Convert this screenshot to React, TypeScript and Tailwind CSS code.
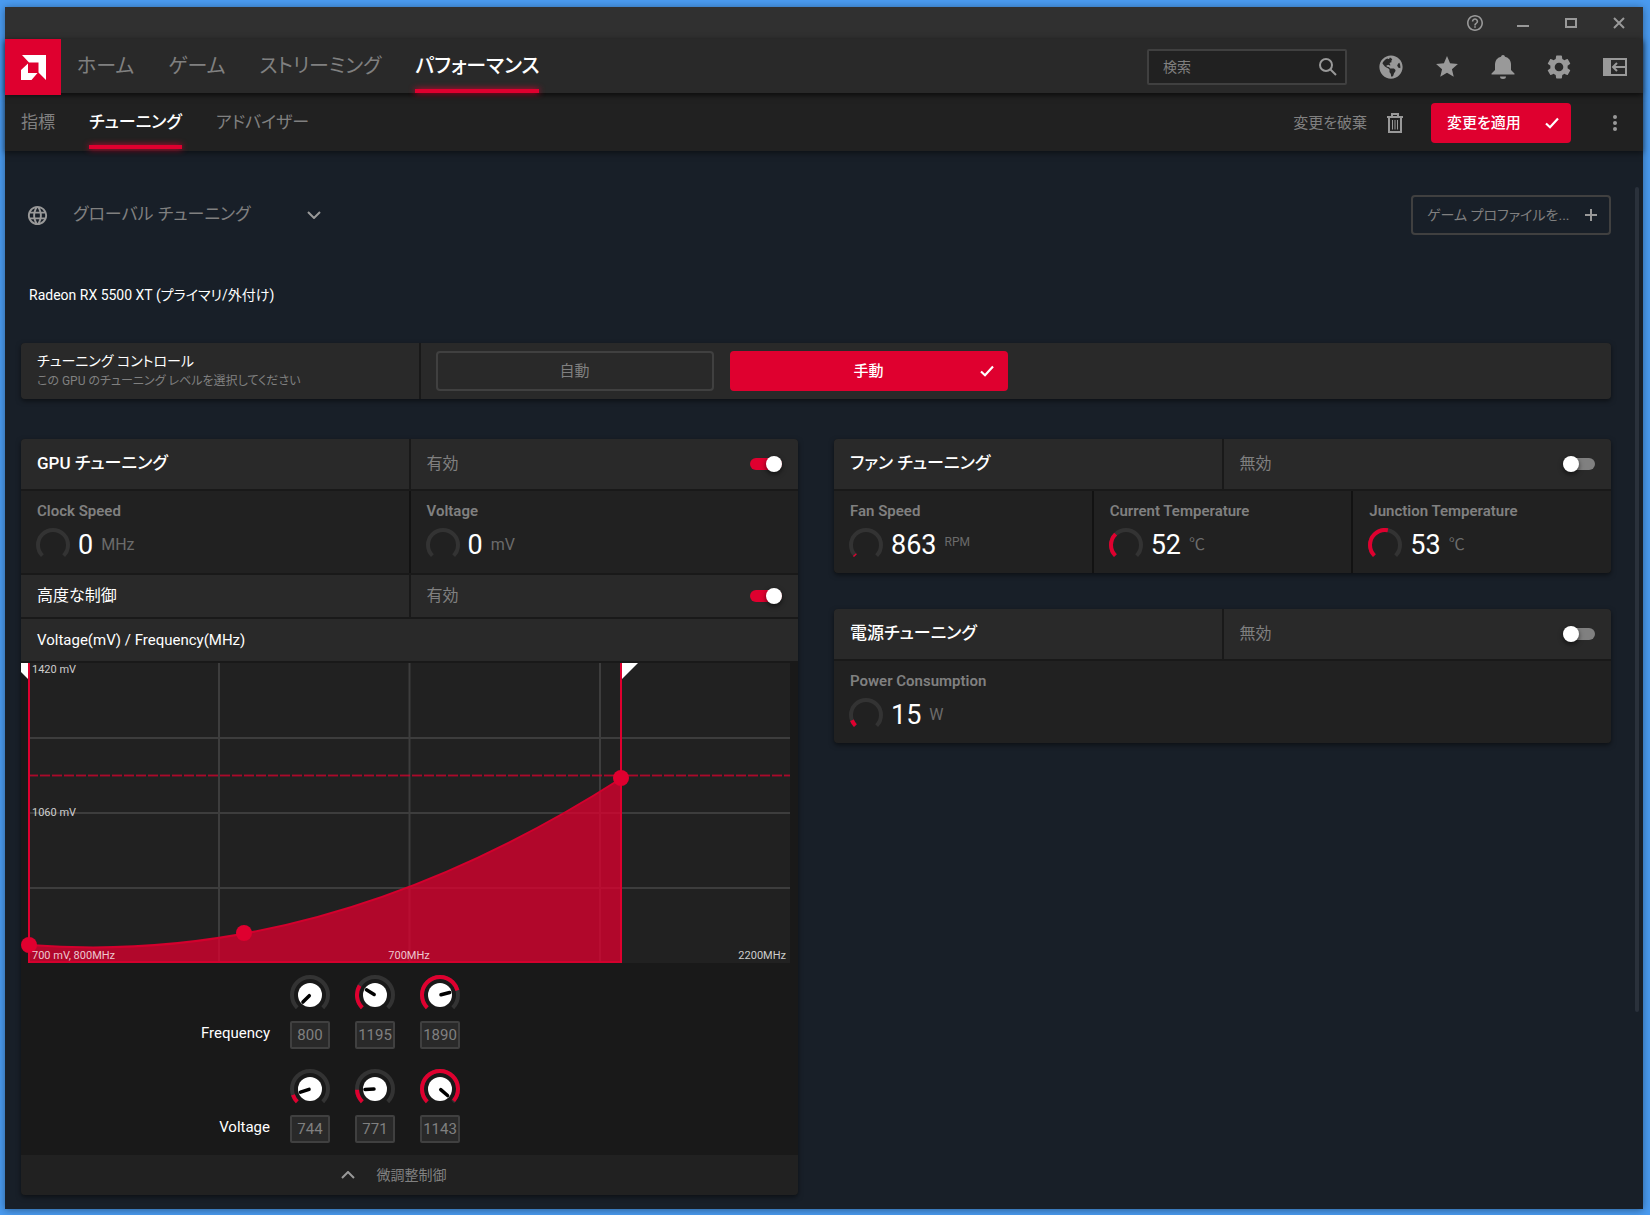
import React, { useState } from "react";
import { FaGlobeAmericas } from "react-icons/fa";
import { MdHelpOutline, MdLanguage, MdSettings, MdStar } from "react-icons/md";

const mainTabs = ["ホーム", "ゲーム", "ストリーミング", "パフォーマンス"];
const subTabs = ["指標", "チューニング", "アドバイザー"];

// Gauges and knobs share a 270 degree track that opens at the bottom
function arcPath(c: number, r: number) {
    const d = r * Math.SQRT1_2;
    return `M${c - d} ${c + d}A${r} ${r} 0 1 1 ${c + d} ${c + d}`;
}

function Arc({ c, r, ratio }: { c: number; r: number; ratio: number }) {
    return (
        <>
            <path d={arcPath(c, r)} fill="none" stroke="#333333" strokeWidth="4" />
            {ratio > 0 && (
                <path
                    d={arcPath(c, r)}
                    fill="none"
                    stroke="#df002f"
                    strokeWidth="4"
                    pathLength={100}
                    strokeDasharray={`${ratio * 100} 200`}
                />
            )}
        </>
    );
}

function CheckIcon() {
    return (
        <svg viewBox="0 0 14 12" className="w-3.5 h-3" fill="none" stroke="currentColor" strokeWidth="2.2">
            <path d="M1 6.5 5 10.2 13 1.5" />
        </svg>
    );
}

function Tab({ label, active, size }: { label: string; active: boolean; size: "lg" | "md" }) {
    return (
        <a
            href="#"
            aria-current={active ? "page" : undefined}
            className={`flex flex-col h-full ${size === "lg" ? "text-xl" : "text-[17px]"} ${active ? "text-white font-medium" : "text-[#808080]"}`}
        >
            <span className={`flex-1 flex items-center ${size === "lg" ? "pt-1" : "pt-2"}`}>{label}</span>
            <span className={`h-1 ${active ? "bg-[#df002f] shadow-[0_0_6px_#df002f]" : ""}`} />
        </a>
    );
}

function Toggle({ id, on }: { id: string; on: boolean }) {
    const [checked, setChecked] = useState(on);
    return (
        <div className="flex-1 flex items-center justify-between px-4 bg-[#292929]">
            <label htmlFor={id} className="text-[#808080]">{checked ? "有効" : "無効"}</label>
            <input
                id={id}
                type="checkbox"
                role="switch"
                checked={checked}
                onChange={() => setChecked(!checked)}
                className="appearance-none w-8 h-3 rounded-full bg-[#808080] checked:bg-[#df002f] before:block before:size-4 before:-mt-0.5 before:rounded-full before:bg-white before:shadow-[0_2px_5px_rgba(0,0,0,0.6)] checked:before:ml-4"
            />
        </div>
    );
}

function PanelHeader({ id, title, on }: { id: string; title: string; on: boolean }) {
    return (
        <div className="grid grid-cols-2 gap-0.5 h-[50px]">
            <h2 className="flex items-center px-4 bg-[#292929] text-[17px] font-medium text-white">{title}</h2>
            <Toggle id={id} on={on} />
        </div>
    );
}

function Metric({ label, value, unit, ratio, small }: { label: string; value: string; unit: string; ratio: number; small?: boolean }) {
    return (
        <div className="h-[82px] px-4 pt-2 bg-[#212121]">
            <div className="text-[15px] leading-6 font-semibold text-[#808080]">{label}</div>
            <div className="flex items-center h-10 mt-0.5">
                <svg viewBox="0 0 34 34" className="size-[34px] -ml-px">
                    <Arc c={17} r={15} ratio={ratio} />
                </svg>
                <span className="ml-2 text-[27px] text-white">{value}</span>
                <span className={`ml-2 text-[#6b6b6b] ${small ? "text-xs -mt-1.5" : "text-base"}`}>{unit}</span>
            </div>
        </div>
    );
}

function Chart() {
    return (
        <svg viewBox="0 0 777 300" className="block w-full" role="img" aria-label="Voltage(mV) / Frequency(MHz)">
            <rect x="8" width="761" height="300" fill="#212121" />
            <g stroke="#3d3d3d" strokeWidth="2">
                <path d="M198 0V300M388.500 0V300M579 0V300" />
                <path d="M8 75H769M8 150H769M8 225H769" />
            </g>
            <path d="M7 112.500H769" stroke="#df002f" strokeOpacity="0.3" strokeWidth="3" strokeDasharray="10 2" />
            <path d="M7 112.500H769" stroke="#df002f" strokeOpacity="0.6" strokeWidth="1" strokeDasharray="10 2" />
            <path d="M8 282Q304 305 600 115.500V299H8Z" fill="#df002f" fillOpacity="0.76" />
            <path d="M8 282Q304 305 600 115.500V299H8" fill="none" stroke="#d3002d" strokeWidth="2" />
            <path d="M0 0H7V16L0 9Z" fill="#fff" />
            <path d="M601 0H617L601 16Z" fill="#fff" />
            <path d="M8 0V300M600 0V300" stroke="#df002f" strokeWidth="2" />
            <g fill="#df002f">
                <circle cx="8" cy="282" r="8" />
                <circle cx="223" cy="270" r="8" />
                <circle cx="600" cy="115" r="8" />
            </g>
            <g fill="#fff" fillOpacity="0.78" fontSize="11">
                <text x="11" y="10">1420 mV</text>
                <text x="11" y="153">1060 mV</text>
                <text x="11" y="296">700 mV, 800MHz</text>
                <text x="388" y="296" textAnchor="middle">700MHz</text>
                <text x="765" y="296" textAnchor="end">2200MHz</text>
            </g>
        </svg>
    );
}

function Knob({ label, initial, min, max }: { label: string; initial: number; min: number; max: number }) {
    const [value, setValue] = useState(initial);
    const ratio = Math.min(1, Math.max(0, (value - min) / (max - min)));
    const onChange = (e: React.ChangeEvent<HTMLInputElement>) => setValue(Number(e.target.value) || 0);

    return (
        <div className="w-10">
            <div className="relative h-[46px]">
                <svg viewBox="0 0 40 40" className="size-10">
                    <Arc c={20} r={18} ratio={ratio} />
                    <circle cx="20" cy="20" r="12" fill="#fff" />
                    <path
                        d="M21 20H30"
                        stroke="#000"
                        strokeWidth="3.5"
                        strokeLinecap="round"
                        transform={`rotate(${135 + ratio * 270} 20 20)`}
                    />
                </svg>
                <input
                    type="range"
                    aria-label={label}
                    min={min}
                    max={max}
                    value={value}
                    onChange={onChange}
                    className="absolute inset-0 w-full h-full opacity-0"
                />
            </div>
            <input
                type="text"
                aria-label={`${label} value`}
                value={value}
                onChange={onChange}
                className="block w-10 h-7 rounded-xs border-2 border-[#404040] bg-[#292929] text-center text-[15px] text-[#808080]"
            />
        </div>
    );
}

function KnobRow({ label, values, min, max }: { label: string; values: number[]; min: number; max: number }) {
    return (
        <div className="flex gap-[25px]">
            <div className="w-[249px] -mr-[5px] pt-[46px] text-right text-[15px] leading-6 text-white">{label}</div>
            {values.map((v, i) => (
                <Knob key={i} label={`${label} ${i + 1}`} initial={v} min={min} max={max} />
            ))}
        </div>
    );
}

export default function App() {
    const [mode, setMode] = useState("manual");

    return (
        <div className="min-h-screen flex flex-col bg-[#4a9bf0] pt-[7px] pr-[7px] pb-1.5 pl-[5px] text-base leading-normal font-['Roboto','Noto_Sans_CJK_JP',sans-serif] [font-feature-settings:'palt']">
            <div className="flex-1 flex flex-col bg-[#181f28] shadow-[0_1px_8px_rgba(0,0,0,0.4)]">
                {/* Window buttons */}
                <div className="flex items-center justify-end h-8 pr-4 gap-8 bg-[#303030] text-[#999999]">
                    <button aria-label="ヘルプ"><MdHelpOutline viewBox="2 2 20 20" className="size-4" /></button>
                    <button aria-label="最小化">
                        <svg viewBox="0 0 16 16" className="size-4" stroke="currentColor" strokeWidth="2"><path d="M2 11H14" /></svg>
                    </button>
                    <button aria-label="最大化">
                        <svg viewBox="0 0 16 16" className="size-4" fill="none" stroke="currentColor" strokeWidth="2"><path d="M3 4H13V12H3Z" /></svg>
                    </button>
                    <button aria-label="閉じる">
                        <svg viewBox="0 0 16 16" className="size-4" stroke="currentColor" strokeWidth="2"><path d="M3 3 13 13M13 3 3 13" /></svg>
                    </button>
                </div>

                {/* Main navigation */}
                <header className="relative z-20 flex h-[54px] pr-4 bg-[#292929] shadow-[0_2px_6px_rgba(0,0,0,0.7)]">
                    <a href="#" aria-label="AMD" className="flex items-center justify-center w-14 h-14 bg-[#df002f]">
                        <svg viewBox="0 0 25 25" className="size-[25px]" fill="#fff">
                            <path d="M1 0H25V25L17.500 17.500V7.500H8Z" />
                            <path d="M7 8.500V18H16.500L10.500 25H0V15Z" />
                        </svg>
                    </a>
                    <nav className="flex gap-[34px] ml-4">
                        {mainTabs.map((t) => <Tab key={t} label={t} active={t === "パフォーマンス"} size="lg" />)}
                    </nav>
                    <div className="flex items-center gap-8 ml-auto pt-0.5 text-[#999999]">
                        <label className="flex items-center w-[200px] h-9 pl-3.5 pr-2 rounded-xs border-2 border-[#404040] bg-[#212121]">
                            <input type="text" placeholder="検索" aria-label="検索" className="flex-1 min-w-0 text-sm placeholder:text-[#808080] outline-none" />
                            <svg viewBox="0 0 18 18" className="size-[18px]" fill="none" stroke="currentColor" strokeWidth="2">
                                <circle cx="7" cy="7" r="6" />
                                <path d="M11.500 11.500 17 17" />
                            </svg>
                        </label>
                        <button aria-label="ブラウザー"><FaGlobeAmericas className="size-6" /></button>
                        <button aria-label="お気に入り"><MdStar viewBox="1 1 22 22" className="size-6" /></button>
                        <button aria-label="通知">
                            <svg viewBox="0 0 24 24" className="size-6" fill="currentColor">
                                <path d="M12 0a2 2 0 0 0-2 1.700C6 2.600 4 5.800 4 9.500V15L.5 18.500V19.500H23.500V18.500L20 15V9.500C20 5.800 18 2.600 14 1.700A2 2 0 0 0 12 0ZM9 21.500H15A3 2.500 0 0 1 9 21.500Z" />
                            </svg>
                        </button>
                        <button aria-label="設定"><MdSettings viewBox="2 2 20 20" className="size-6" /></button>
                        <button aria-label="パネル">
                            <svg viewBox="0 0 24 24" className="size-6" fill="none" stroke="currentColor" strokeWidth="2">
                                <path d="M0 3H8V21H0Z" fill="currentColor" stroke="none" />
                                <path d="M7 4H23V20H7M23 12H10M14 8 10 12 14 16" />
                            </svg>
                        </button>
                    </div>
                </header>

                {/* Sub navigation */}
                <div className="relative z-10 flex items-center h-[58px] pl-4 pr-4 bg-[#212121] shadow-[0_2px_6px_rgba(0,0,0,0.5)]">
                    <nav className="flex gap-[34px] h-full pb-0.5">
                        {subTabs.map((t) => <Tab key={t} label={t} active={t === "チューニング"} size="md" />)}
                    </nav>
                    <div className="flex items-center ml-auto pt-0.5">
                        <button className="flex items-center gap-5 text-[15px] text-[#808080]">
                            変更を破棄
                            <svg viewBox="0 0 16 20" className="w-4 h-5 text-[#999999]" fill="none" stroke="currentColor" strokeWidth="2">
                                <path d="M0 4H16M5 3V1H11V3M2 4V19H14V4" />
                                <path d="M5.500 7V16.500M8 7V16.500M10.500 7V16.500" strokeWidth="1" />
                            </svg>
                        </button>
                        <button className="flex items-center justify-between w-[140px] h-10 ml-7 pl-4 pr-3 rounded-sm bg-[#df002f] text-[15px] font-medium text-white">
                            変更を適用
                            <CheckIcon />
                        </button>
                        <button aria-label="メニュー" className="flex justify-center w-6 ml-8">
                            <svg viewBox="0 0 4 16" className="w-1 h-4" fill="#999999">
                                <circle cx="2" cy="2" r="2" /><circle cx="2" cy="8" r="2" /><circle cx="2" cy="14" r="2" />
                            </svg>
                        </button>
                    </div>
                </div>

                <div className="flex-1 flex pl-4 pr-1 pb-3.5">
                    <main className="flex-1 min-w-0">
                        <div className="flex items-center justify-between h-10 mt-11 pl-[5px]">
                            <div className="flex items-center text-[#999999]">
                                <MdLanguage className="size-[23px]" />
                                <div className="grid items-center ml-6 w-[248px]">
                                    <select aria-label="プロファイル" className="col-start-1 row-start-1 appearance-none text-[17px] text-[#808080] outline-none">
                                        <option>グローバル チューニング</option>
                                    </select>
                                    <svg viewBox="0 0 14 8" className="col-start-1 row-start-1 justify-self-end w-3.5 h-2 pointer-events-none" fill="none" stroke="currentColor" strokeWidth="2">
                                        <path d="M1 1 7 7 13 1" />
                                    </svg>
                                </div>
                            </div>
                            <button className="flex items-center justify-between w-[200px] h-10 pl-3.5 pr-3 rounded-sm border-2 border-[#404040] text-sm text-[#808080]">
                                ゲーム プロファイルを...
                                <svg viewBox="0 0 12 12" className="size-3" stroke="#999999" strokeWidth="2"><path d="M6 0V12M0 6H12" /></svg>
                            </button>
                        </div>

                        <h1 className="mt-12 h-6 pl-2 text-sm leading-6 text-white">Radeon RX 5500 XT (プライマリ/外付け)</h1>

                        <section className="flex gap-0.5 h-14 mt-9 rounded-sm overflow-hidden bg-[#191919] shadow-[0_2px_5px_rgba(0,0,0,0.5)]">
                            <div className="w-1/4 flex flex-col justify-center pl-4 bg-[#292929]">
                                <div className="text-sm leading-5 text-white">チューニング コントロール</div>
                                <div className="text-xs leading-5 text-[#808080]">この GPU のチューニング レベルを選択してください</div>
                            </div>
                            <div className="flex-1 flex items-center gap-4 pl-[15px] bg-[#292929] text-[15px]">
                                <button
                                    onClick={() => setMode("auto")}
                                    className={`grid grid-cols-[1fr_auto_1fr] items-center w-[278px] h-10 px-3 rounded-sm border-2 ${mode === "auto" ? "border-[#df002f] bg-[#df002f] text-white font-medium" : "border-[#404040] text-[#808080]"}`}
                                >
                                    <span className="col-start-2">自動</span>
                                    {mode === "auto" && <span className="justify-self-end"><CheckIcon /></span>}
                                </button>
                                <button
                                    onClick={() => setMode("manual")}
                                    className={`grid grid-cols-[1fr_auto_1fr] items-center w-[278px] h-10 px-3 rounded-sm border-2 ${mode === "manual" ? "border-[#df002f] bg-[#df002f] text-white font-medium" : "border-[#404040] text-[#808080]"}`}
                                >
                                    <span className="col-start-2">手動</span>
                                    {mode === "manual" && <span className="justify-self-end"><CheckIcon /></span>}
                                </button>
                            </div>
                        </section>

                        <div className="grid grid-cols-2 items-start gap-9 mt-10">
                            {/* GPU */}
                            <section className="flex flex-col gap-0.5 rounded-sm overflow-hidden bg-[#191919] shadow-[0_2px_5px_rgba(0,0,0,0.5)]">
                                <PanelHeader id="gpu" title="GPU チューニング" on={true} />
                                <div className="grid grid-cols-2 gap-0.5 bg-[#121212]">
                                    <Metric label="Clock Speed" value="0" unit="MHz" ratio={0} />
                                    <Metric label="Voltage" value="0" unit="mV" ratio={0} />
                                </div>
                                <div className="grid grid-cols-2 gap-0.5 h-[42px]">
                                    <h3 className="flex items-center px-4 bg-[#292929] text-white">高度な制御</h3>
                                    <Toggle id="advanced" on={true} />
                                </div>
                                <h3 className="flex items-center h-[42px] px-4 bg-[#292929] text-[15px] text-white">Voltage(mV) / Frequency(MHz)</h3>
                                <div>
                                    <Chart />
                                    <div className="flex flex-col gap-5 pt-3 pb-3">
                                        <KnobRow label="Frequency" values={[800, 1195, 1890]} min={800} max={2200} />
                                        <KnobRow label="Voltage" values={[744, 771, 1143]} min={700} max={1150} />
                                    </div>
                                    <button className="flex items-center justify-center gap-[22px] w-full h-10 pr-8 bg-[#212121] text-sm text-[#808080]">
                                        <svg viewBox="0 0 14 8" className="w-3.5 h-2" fill="none" stroke="#999999" strokeWidth="2">
                                            <path d="M1 7 7 1 13 7" />
                                        </svg>
                                        微調整制御
                                    </button>
                                </div>
                            </section>

                            <div className="flex flex-col gap-9">
                                {/* Fan */}
                                <section className="flex flex-col gap-0.5 rounded-sm overflow-hidden bg-[#191919] shadow-[0_2px_5px_rgba(0,0,0,0.5)]">
                                    <PanelHeader id="fan" title="ファン チューニング" on={false} />
                                    <div className="grid grid-cols-3 gap-0.5 bg-[#121212]">
                                        <Metric label="Fan Speed" value="863" unit="RPM" ratio={0.02} small />
                                        <Metric label="Current Temperature" value="52" unit="℃" ratio={0.34} />
                                        <Metric label="Junction Temperature" value="53" unit="℃" ratio={0.54} />
                                    </div>
                                </section>

                                {/* Power */}
                                <section className="flex flex-col gap-0.5 rounded-sm overflow-hidden bg-[#191919] shadow-[0_2px_5px_rgba(0,0,0,0.5)]">
                                    <PanelHeader id="power" title="電源チューニング" on={false} />
                                    <Metric label="Power Consumption" value="15" unit="W" ratio={0.09} />
                                </section>
                            </div>
                        </div>
                    </main>

                    {/* Scrollbar */}
                    <div className="w-1 ml-6 mt-9">
                        <div className="h-[825px] rounded-full bg-[#2a313b]" />
                    </div>
                </div>
            </div>
        </div>
    );
}
